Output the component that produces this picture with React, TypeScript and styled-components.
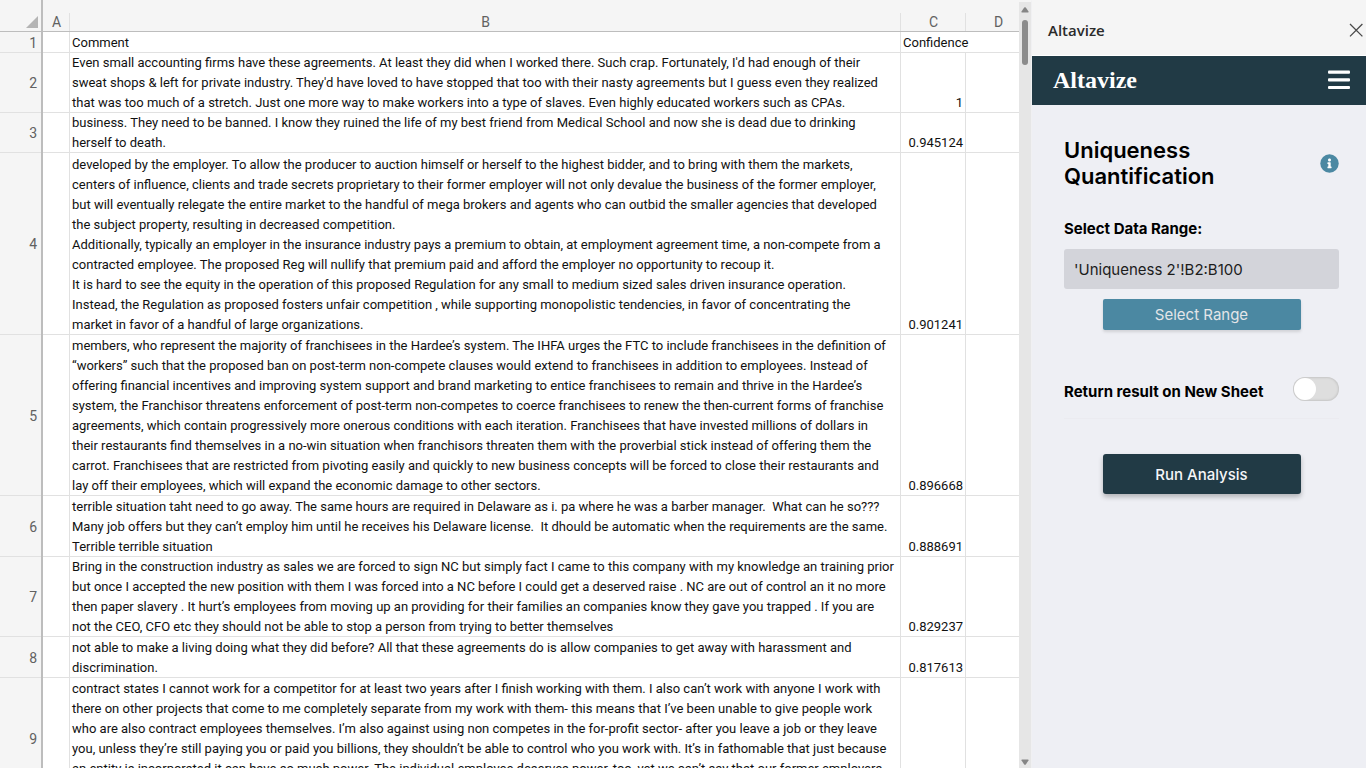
import React from "react";
import styled, { createGlobalStyle } from "styled-components";

const GlobalStyle = createGlobalStyle`
  *, *::before, *::after { box-sizing: border-box; }
  body {
    margin: 0;
    background: #ffffff;
    font-family: Inter, "Liberation Sans", sans-serif;
    overflow: hidden;
  }
`;

const color = {
  chrome: "#f5f5f5",
  grid: "#e1e1e1",
  headLine: "#bdbdbd",
  headText: "#616161",
  navy: "#213a45",
  teal: "#4b88a2",
  pane: "#eeeff4",
};

const Window = styled.div`
  display: flex;
  height: 100vh;
`;

/* ---------- worksheet ---------- */

const SheetArea = styled.main`
  flex: 1;
  min-width: 0;
  overflow: hidden;
  background: linear-gradient(${color.chrome} 31px, #ffffff 31px);
`;

/* The last column runs on under the scrollbar. */
const Sheet = styled.table`
  width: calc(100% + 12px);
  table-layout: fixed;
  border-collapse: separate;
  border-spacing: 0;
  font-family: Roboto, "Liberation Sans", sans-serif;
  font-size: 13px;
  line-height: 20px;
  color: #111111;
`;

const Col = styled.col<{ $width?: number }>`
  width: ${(p) => (p.$width ? `${p.$width}px` : "auto")};
`;

const HeadRow = styled.tr`
  height: 32px;
`;

const Corner = styled.td`
  padding: 0 3px 3px 0;
  border-right: 2px solid ${color.headLine};
  border-bottom: 1px solid ${color.headLine};
  background: ${color.chrome};
  vertical-align: bottom;
`;

const CornerMark = styled.svg`
  display: block;
  margin-left: auto;
`;

const ColumnHead = styled.th`
  padding: 13px 0 0;
  border-bottom: 1px solid ${color.headLine};
  background: linear-gradient(${color.grid}, ${color.grid}) right bottom / 1px 18px no-repeat ${color.chrome};
  color: ${color.headText};
  font-size: 14px;
  font-weight: 400;
  line-height: 18px;
`;

const DataRow = styled.tr<{ $height: number }>`
  height: ${(p) => p.$height}px;
`;

const RowHead = styled.th`
  padding: 0 4px 0 0;
  border-right: 2px solid ${color.headLine};
  box-shadow: inset 0 -1px ${color.grid};
  background: ${color.chrome};
  color: ${color.headText};
  font-size: 14px;
  font-weight: 400;
  text-align: right;
`;

const Cell = styled.td<{ $numeric?: boolean; $spills?: boolean }>`
  padding: 0 2px;
  padding-right: ${(p) => (p.$numeric ? 3 : 2)}px;
  box-shadow: inset ${(p) => (p.$spills ? "0" : "-1px")} -1px ${color.grid};
  text-align: ${(p) => (p.$numeric ? "right" : "left")};
  vertical-align: bottom;
  white-space: pre;
`;

/* ---------- scrollbar ---------- */

const ScrollTrack = styled.div`
  display: flex;
  flex-direction: column;
  align-items: center;
  flex: none;
  width: 13px;
  padding: 5px 1px 3px 0;
  border-top: 2px solid ${color.chrome};
  border-right: 1px solid #f0f0f2;
  background: #e6e6e6;
`;

const ScrollThumb = styled.div`
  width: 6px;
  height: 45px;
  margin: 7px 0 auto;
  border-radius: 3px;
  background: #8b8b8b;
`;

/* ---------- task pane ---------- */

const Pane = styled.aside`
  display: flex;
  flex-direction: column;
  flex: none;
  width: 334px;
  background: ${color.pane};
`;

const PaneHeader = styled.header`
  display: flex;
  align-items: center;
  justify-content: space-between;
  height: 56px;
  padding: 4px 2px 0 16px;
  border-bottom: 1px solid #ffffff;
  background: ${color.chrome};
`;

const PaneTitle = styled.span`
  color: #2b2b2b;
  font-family: "Open Sans", "Noto Sans", sans-serif;
  font-size: 15px;
  font-weight: 600;
`;

const IconButton = styled.button`
  display: flex;
  padding: 0;
  border: 0;
  background: none;
  color: inherit;
`;

const NavBar = styled.nav`
  display: flex;
  align-items: center;
  justify-content: space-between;
  height: 49px;
  padding: 0 16px 0 21px;
  background: ${color.navy};
  color: #ffffff;
`;

const Logo = styled.span`
  font-family: "Liberation Serif", serif;
  font-size: 24px;
  font-weight: 700;
`;

const PaneBody = styled.form`
  display: flex;
  flex-direction: column;
  padding: 32px 27px 0 32px;
`;

const TitleRow = styled.div`
  display: flex;
  align-items: center;
  justify-content: space-between;
`;

const Title = styled.h1`
  width: 180px;
  margin: 0;
  color: #000000;
  font-size: 22px;
  font-weight: 600;
  line-height: 26px;
`;

const FieldLabel = styled.label`
  color: #000000;
  font-size: 15px;
  font-weight: 700;
  line-height: 20px;
`;

const RangeField = styled.div`
  display: flex;
  flex-direction: column;
  gap: 10px;
  margin-top: 30px;
`;

const RangeInput = styled.input`
  height: 40px;
  padding: 0 10px;
  border: 0;
  border-radius: 3px;
  background: #d3d4da;
  color: #1c1c1c;
  font-family: inherit;
  font-size: 15px;
`;

const ActionButton = styled.button<{ $primary?: boolean }>`
  align-self: center;
  width: 72%;
  height: ${(p) => (p.$primary ? 40 : 31)}px;
  padding: 0;
  border: 0;
  border-radius: ${(p) => (p.$primary ? 3 : 2)}px;
  background: ${(p) => (p.$primary ? color.navy : color.teal)};
  box-shadow: ${(p) =>
    p.$primary ? "0 3px 5px rgba(0, 0, 0, 0.25)" : "0 2px 3px rgba(0, 0, 0, 0.12)"};
  color: ${(p) => (p.$primary ? "#f5f6f8" : "#e3e5e8")};
  font-family: inherit;
  font-size: 15px;
  font-weight: ${(p) => (p.$primary ? 500 : 400)};
`;

const SwitchRow = styled.div`
  display: flex;
  justify-content: space-between;
  align-items: center;
  margin: 45px 0 35px;
  padding-bottom: 16px;
  border-bottom: 1px solid #ebebf0;

  ${FieldLabel} {
    padding-top: 7px;
  }
`;

const Switch = styled.input`
  appearance: none;
  display: flex;
  align-items: center;
  width: 46px;
  height: 24px;
  margin: 0;
  padding: 0 1px;
  border-radius: 12px;
  background: #dedede;
  box-shadow: inset 0 0 2px 1px #c6c6c6;

  &::before {
    content: "";
    width: 22px;
    height: 22px;
    border-radius: 50%;
    background: #ffffff;
  }

  &:checked {
    justify-content: flex-end;
    background: ${color.teal};
  }
`;

type SheetRow = { height: number; comment: string; confidence: string };

const rows: SheetRow[] = [
  { height: 21, comment: "Comment", confidence: "Confidence" },
  {
    height: 60,
    confidence: "1",
    comment: `Even small accounting firms have these agreements. At least they did when I worked there. Such crap. Fortunately, I'd had enough of their
sweat shops & left for private industry. They'd have loved to have stopped that too with their nasty agreements but I guess even they realized
that was too much of a stretch. Just one more way to make workers into a type of slaves. Even highly educated workers such as CPAs.`,
  },
  {
    height: 40,
    confidence: "0.945124",
    comment: `business. They need to be banned. I know they ruined the life of my best friend from Medical School and now she is dead due to drinking
herself to death.`,
  },
  {
    height: 182,
    confidence: "0.901241",
    comment: `developed by the employer. To allow the producer to auction himself or herself to the highest bidder, and to bring with them the markets,
centers of influence, clients and trade secrets proprietary to their former employer will not only devalue the business of the former employer,
but will eventually relegate the entire market to the handful of mega brokers and agents who can outbid the smaller agencies that developed
the subject property, resulting in decreased competition.
Additionally, typically an employer in the insurance industry pays a premium to obtain, at employment agreement time, a non-compete from a
contracted employee. The proposed Reg will nullify that premium paid and afford the employer no opportunity to recoup it.
It is hard to see the equity in the operation of this proposed Regulation for any small to medium sized sales driven insurance operation.
Instead, the Regulation as proposed fosters unfair competition , while supporting monopolistic tendencies, in favor of concentrating the
market in favor of a handful of large organizations.`,
  },
  {
    height: 161,
    confidence: "0.896668",
    comment: `members, who represent the majority of franchisees in the Hardee’s system. The IHFA urges the FTC to include franchisees in the definition of
“workers” such that the proposed ban on post-term non-compete clauses would extend to franchisees in addition to employees. Instead of
offering financial incentives and improving system support and brand marketing to entice franchisees to remain and thrive in the Hardee’s
system, the Franchisor threatens enforcement of post-term non-competes to coerce franchisees to renew the then-current forms of franchise
agreements, which contain progressively more onerous conditions with each iteration. Franchisees that have invested millions of dollars in
their restaurants find themselves in a no-win situation when franchisors threaten them with the proverbial stick instead of offering them the
carrot. Franchisees that are restricted from pivoting easily and quickly to new business concepts will be forced to close their restaurants and
lay off their employees, which will expand the economic damage to other sectors.`,
  },
  {
    height: 61,
    confidence: "0.888691",
    comment: `terrible situation taht need to go away. The same hours are required in Delaware as i. pa where he was a barber manager.  What can he so???
Many job offers but they can’t employ him until he receives his Delaware license.  It dhould be automatic when the requirements are the same.
Terrible terrible situation`,
  },
  {
    height: 80,
    confidence: "0.829237",
    comment: `Bring in the construction industry as sales we are forced to sign NC but simply fact I came to this company with my knowledge an training prior
but once I accepted the new position with them I was forced into a NC before I could get a deserved raise . NC are out of control an it no more
then paper slavery . It hurt’s employees from moving up an providing for their families an companies know they gave you trapped . If you are
not the CEO, CFO etc they should not be able to stop a person from trying to better themselves`,
  },
  {
    height: 41,
    confidence: "0.817613",
    comment: `not able to make a living doing what they did before? All that these agreements do is allow companies to get away with harassment and
discrimination.`,
  },
  {
    height: 121,
    confidence: "",
    comment: `contract states I cannot work for a competitor for at least two years after I finish working with them. I also can’t work with anyone I work with
there on other projects that come to me completely separate from my work with them- this means that I’ve been unable to give people work
who are also contract employees themselves. I’m also against using non competes in the for-profit sector- after you leave a job or they leave
you, unless they’re still paying you or paid you billions, they shouldn’t be able to control who you work with. It’s in fathomable that just because
an entity is incorporated it can have so much power. The individual employee deserves power, too, yet we can’t say that our former employers
 `,
  },
];

const ScrollArrow = ({ down }: { down?: boolean }) => (
  <svg width="8" height="6" viewBox="0 0 8 6" aria-hidden="true">
    <path
      d={down ? "M1 .5h6q1 0 .5 1L4.8 5.4q-.8.8-1.6 0L.5 1.5Q0 .5 1 .5z" : "M1 5.5h6q1 0 .5-1L4.8.6q-.8-.8-1.6 0L.5 4.5q-.5 1 .5 1z"}
      fill="#858585"
    />
  </svg>
);

const CloseIcon = () => (
  <svg width="16" height="16" viewBox="0 0 16 16" fill="none" stroke="#4a4a4a" strokeWidth="1.3" aria-hidden="true">
    <path d="M2 2l12.400 12.400M14.400 2L2 14.400" />
  </svg>
);

const MenuIcon = () => (
  <svg width="22" height="22" viewBox="0 0 22 22" fill="#ffffff" aria-hidden="true">
    <rect y="0.5" width="22" height="3.200" rx="1" />
    <rect y="8.200" width="22" height="3.200" rx="1" />
    <rect y="15.900" width="22" height="3.200" rx="1" />
  </svg>
);

const InfoIcon = () => (
  <svg width="19" height="19" viewBox="0 0 512 512" aria-hidden="true">
    <circle cx="256" cy="256" r="248" fill={color.teal} />
    <path
      fill="#ffffff"
      d="M256 118c23.200 0 42 18.800 42 42s-18.800 42-42 42-42-18.800-42-42 18.800-42 42-42zm56 254c0 6.600-5.400 12-12 12h-88c-6.600 0-12-5.400-12-12v-24c0-6.600 5.400-12 12-12h12v-64h-12c-6.600 0-12-5.400-12-12v-24c0-6.600 5.400-12 12-12h64c6.600 0 12 5.400 12 12v100h12c6.600 0 12 5.400 12 12z"
    />
  </svg>
);

export default function App() {
  return (
    <>
      <GlobalStyle />
      <Window>
        <SheetArea>
          <Sheet>
            <colgroup>
              <Col $width={43} />
              <Col $width={27} />
              <Col />
              <Col $width={65} />
              <Col $width={65} />
            </colgroup>
            <thead>
              <HeadRow>
                <Corner>
                  <CornerMark width="12" height="12" viewBox="0 0 12 12" aria-hidden="true">
                    <path d="M12 0v12H0z" fill="#b4b4b4" />
                  </CornerMark>
                </Corner>
                {["A", "B", "C", "D"].map((name) => (
                  <ColumnHead key={name} scope="col">{name}</ColumnHead>
                ))}
              </HeadRow>
            </thead>
            <tbody>
              {rows.map((row, i) => (
                <DataRow key={i} $height={row.height}>
                  <RowHead scope="row">{i + 1}</RowHead>
                  <Cell />
                  <Cell>{row.comment}</Cell>
                  <Cell $numeric={i > 0} $spills={i === 0}>{row.confidence}</Cell>
                  <Cell />
                </DataRow>
              ))}
            </tbody>
          </Sheet>
        </SheetArea>

        <ScrollTrack aria-hidden="true">
          <ScrollArrow />
          <ScrollThumb />
          <ScrollArrow down />
        </ScrollTrack>

        <Pane>
          <PaneHeader>
            <PaneTitle>Altavize</PaneTitle>
            <IconButton type="button" aria-label="Close"><CloseIcon /></IconButton>
          </PaneHeader>
          <NavBar>
            <Logo>Altavize</Logo>
            <IconButton type="button" aria-label="Menu"><MenuIcon /></IconButton>
          </NavBar>
          <PaneBody onSubmit={(e) => e.preventDefault()}>
            <TitleRow>
              <Title>Uniqueness Quantification</Title>
              <IconButton type="button" aria-label="Information"><InfoIcon /></IconButton>
            </TitleRow>
            <RangeField>
              <FieldLabel htmlFor="range">Select Data Range:</FieldLabel>
              <RangeInput id="range" type="text" readOnly value="'Uniqueness 2'!B2:B100" />
              <ActionButton type="button">Select Range</ActionButton>
            </RangeField>
            <SwitchRow>
              <FieldLabel htmlFor="new-sheet">Return result on New Sheet</FieldLabel>
              <Switch id="new-sheet" type="checkbox" role="switch" />
            </SwitchRow>
            <ActionButton type="submit" $primary>Run Analysis</ActionButton>
          </PaneBody>
        </Pane>
      </Window>
    </>
  );
}
